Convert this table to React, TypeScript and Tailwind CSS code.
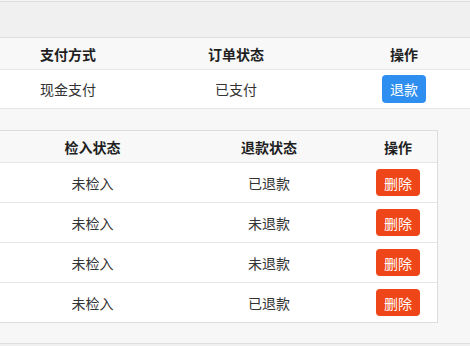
import React from "react";

const font = { fontFamily: '"Noto Sans CJK SC", "Noto Sans", sans-serif' };

const rows2 = [
  { a: "未检入", b: "已退款" },
  { a: "未检入", b: "未退款" },
  { a: "未检入", b: "未退款" },
  { a: "未检入", b: "已退款" },
];

export default function App() {
  return (
    <div
      className="w-[470px] h-[346px] overflow-hidden bg-[#f7f7f7] text-[14px] leading-none text-[#333]"
      style={font}
    >
      {/* top band */}
      <div className="h-px bg-[#f5f5f5]" />
      <div className="h-[37px] bg-[#f0f0f0] border-t border-b border-[#dedede]" />

      {/* first table */}
      <div className="ml-[-16px] w-[504px]">
        <div className="grid grid-cols-3 h-[32px] bg-[#f8f8f8] border-b border-[#e6e6e6] items-center font-bold text-[#1f1f1f]">
          <div className="text-center">支付方式</div>
          <div className="text-center">订单状态</div>
          <div className="text-center">操作</div>
        </div>
        <div className="grid grid-cols-3 h-[39px] bg-white border-b border-[#e6e6e6] items-center">
          <div className="text-center">现金支付</div>
          <div className="text-center">已支付</div>
          <div className="flex justify-center">
            <div className="w-[44px] h-[28px] rounded-[4px] bg-[#2f8ff0] text-white flex items-center justify-center">
              退款
            </div>
          </div>
        </div>
      </div>

      {/* second table */}
      <div className="mt-[21px] ml-[-21px] w-[459px] border border-[#dcdcdc] bg-white">
        <div className="grid grid-cols-[26px_173px_180px_1fr] h-[32px] bg-[#f8f8f8] border-b border-[#e6e6e6] items-center font-bold text-[#1f1f1f]">
          <div />
          <div className="text-center">检入状态</div>
          <div className="text-center">退款状态</div>
          <div className="text-center">操作</div>
        </div>
        {rows2.map((r, i) => (
          <div
            key={i}
            className={
              i < rows2.length - 1
                ? "grid grid-cols-[26px_173px_180px_1fr] h-[40px] border-b border-[#e6e6e6] items-center"
                : "grid grid-cols-[26px_173px_180px_1fr] h-[39px] items-center"
            }
          >
            <div />
            <div className="text-center">{r.a}</div>
            <div className="text-center">{r.b}</div>
            <div className="flex justify-center">
              <div className="w-[44px] h-[27px] rounded-[4px] bg-[#ef4619] text-white flex items-center justify-center">
                删除
              </div>
            </div>
          </div>
        ))}
      </div>

      {/* bottom band */}
      <div className="mt-[20px] h-[10px] border-t border-[#dedede] bg-[#f0f0f0]" />
    </div>
  );
}
